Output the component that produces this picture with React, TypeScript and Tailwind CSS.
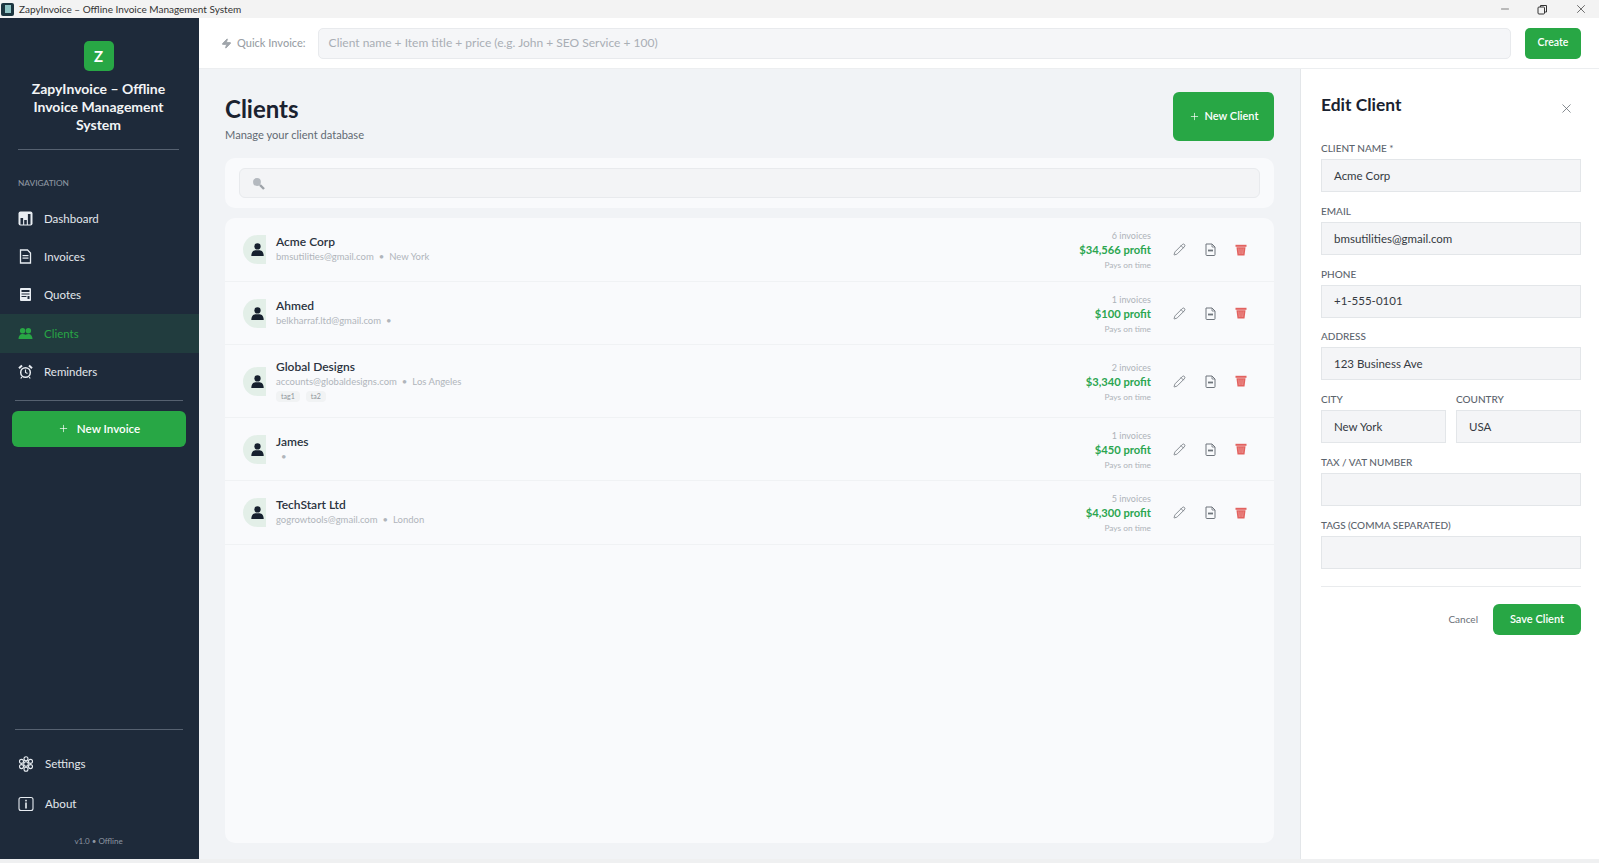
// App.tsx
import { Pencil, Plus, X, Minus, Zap } from "lucide-react";

type Client = {
  name: string;
  email: string;
  city: string;
  invoices: number;
  profit: string;
  tags?: string[];
  h: string;
};

const clients: Client[] = [
  { name: "Acme Corp", email: "bmsutilities@gmail.com", city: "New York", invoices: 6, profit: "$34,566", h: "h-[64px]" },
  { name: "Ahmed", email: "belkharraf.ltd@gmail.com", city: "", invoices: 1, profit: "$100", h: "h-[63px]" },
  { name: "Global Designs", email: "accounts@globaldesigns.com", city: "Los Angeles", invoices: 2, profit: "$3,340", tags: ["tag1", "ta2"], h: "h-[73px]" },
  { name: "James", email: "", city: "", invoices: 1, profit: "$450", h: "h-[63px]" },
  { name: "TechStart Ltd", email: "gogrowtools@gmail.com", city: "London", invoices: 5, profit: "$4,300", h: "h-[64px]" },
];

function DashboardIcon() {
  return (
    <svg width="15" height="15" viewBox="0 0 15 15">
      <rect x="0.5" y="0.5" width="14" height="14" rx="2" fill="#e8edf2" />
      <rect x="2.5" y="7" width="2.6" height="6.5" fill="#1e2a3a" />
      <rect x="6.2" y="9" width="2.6" height="4.5" fill="#1e2a3a" />
      <rect x="9.9" y="3" width="2.6" height="10.5" fill="#1e2a3a" />
    </svg>
  );
}

function InvoiceIcon() {
  return (
    <svg width="15" height="15" viewBox="0 0 15 15">
      <path d="M2.5 1h7l3 3v10h-10z" fill="none" stroke="#e8edf2" strokeWidth="1.3" />
      <rect x="4.5" y="6" width="6" height="1.2" fill="#e8edf2" />
      <rect x="4.5" y="8.5" width="6" height="1.2" fill="#e8edf2" />
    </svg>
  );
}

function QuoteIcon() {
  return (
    <svg width="15" height="15" viewBox="0 0 15 15">
      <rect x="2" y="1" width="11" height="13" rx="1" fill="#e8edf2" />
      <rect x="3.5" y="3" width="8" height="2" fill="#1e2a3a" />
      <rect x="3.5" y="6.5" width="8" height="1" fill="#1e2a3a" />
      <rect x="3.5" y="9" width="5" height="1" fill="#1e2a3a" />
      <rect x="9.5" y="9" width="2" height="3" fill="#1e2a3a" />
    </svg>
  );
}

function ClientsIcon() {
  return (
    <svg width="15" height="15" viewBox="0 0 15 15" fill="#28a745">
      <circle cx="4.6" cy="4.8" r="2.7" />
      <circle cx="10.4" cy="4.8" r="2.7" />
      <path d="M0.5 13c0-3 1.5-5 4-5s3 1 3 1 .6-1 3-1 4 2 4 5z" />
    </svg>
  );
}

function AlarmIcon() {
  return (
    <svg width="15" height="15" viewBox="0 0 15 15" fill="none" stroke="#e8edf2">
      <circle cx="7.5" cy="8.5" r="4.8" strokeWidth="1.5" />
      <path d="M7.5 5.5v3l2 1" strokeWidth="1.1" />
      <path d="M1 4.2 4 1.4M14 4.2 11 1.4" strokeWidth="2" />
      <path d="M3.8 13 2.8 14.5M11.2 13l1 1.5" strokeWidth="1.2" />
    </svg>
  );
}

function GearIcon() {
  return (
    <svg width="16" height="16" viewBox="0 0 16 16" fill="none" stroke="#e8edf2" strokeWidth="1.1">
      <circle cx="8" cy="8" r="2.3" />
      <circle cx="8" cy="2.8" r="2" />
      <circle cx="8" cy="13.2" r="2" />
      <circle cx="3.5" cy="5.4" r="2" />
      <circle cx="12.5" cy="5.4" r="2" />
      <circle cx="3.5" cy="10.6" r="2" />
      <circle cx="12.5" cy="10.6" r="2" />
    </svg>
  );
}

function InfoIcon() {
  return (
    <svg width="16" height="16" viewBox="0 0 16 16" fill="none" stroke="#e8edf2">
      <rect x="1" y="1.5" width="14" height="13" rx="2" strokeWidth="1.1" />
      <rect x="7.2" y="3.8" width="1.6" height="1.6" fill="#e8edf2" stroke="none" />
      <rect x="7.2" y="6.5" width="1.6" height="6" fill="#e8edf2" stroke="none" />
    </svg>
  );
}

function PersonIcon() {
  return (
    <svg width="13" height="13" viewBox="0 0 12 12" fill="#16202e">
      <circle cx="6" cy="3.2" r="2.9" />
      <path d="M0.3 12c0-3.6 1.8-5 3.6-5.2h4.2c1.8.2 3.6 1.6 3.6 5.2z" />
    </svg>
  );
}

function DocIcon() {
  return (
    <svg width="11" height="13" viewBox="0 0 11 13" fill="none" stroke="#6f757c" strokeWidth="1">
      <path d="M1 1h6l3 3v7.7a.8.8 0 0 1-.8.8H1.8a.8.8 0 0 1-.8-.8z" />
      <path d="M7 1v3h3" strokeWidth="0.8" />
      <rect x="3" y="6.6" width="5" height="1.8" fill="#6f757c" stroke="none" />
    </svg>
  );
}

function TrashIcon() {
  return (
    <svg width="12" height="12" viewBox="0 0 12 12">
      <rect x="0.5" y="0.8" width="11" height="2" fill="#e2625f" />
      <path d="M1.5 3.2h9l-1 8.3h-7z" fill="#e2625f" />
      <path d="M3.8 4.5l.5 5.5M6 4.5V10M8.2 4.5l-.5 5.5" stroke="#f3b2b0" strokeWidth="0.6" />
    </svg>
  );
}

function SearchIcon() {
  return (
    <svg width="13" height="13" viewBox="0 0 13 13">
      <circle cx="5" cy="5" r="3.9" fill="#b4b9bf" />
      <path d="M8 8l4 4" stroke="#9da2a8" strokeWidth="2.4" />
    </svg>
  );
}

function NavItem({ icon, label, active }: { icon: React.ReactNode; label: string; active?: boolean }) {
  return (
    <div
      className={
        "flex h-[38.4px] items-center gap-[11px] pl-[18px] text-[11.5px] " +
        (active ? "bg-[#213c3e] text-[#28a745]" : "text-[#e2e7ec]")
      }
    >
      <span className="flex w-[15px] justify-center">{icon}</span>
      <span>{label}</span>
    </div>
  );
}

function Field({ label, value, className }: { label: string; value?: string; className?: string }) {
  return (
    <div className={className}>
      <div className="mb-[4px] h-[14px] text-[10px] leading-[14px] font-medium text-[#5c646d] uppercase">{label}</div>
      <div className="flex h-[33px] items-center border border-[#e3e6e9] bg-[#f4f5f7] px-[12px] text-[11.5px] text-[#343a42]">
        {value}
      </div>
    </div>
  );
}

function ClientRow({ client }: { client: Client }) {
  return (
    <div className={"flex items-center border-b border-[#f0f2f4] pr-[27px] pl-[18px] " + client.h}>
      <div className="flex h-[29px] w-[23px] items-center justify-end rounded-l-full bg-[#e3efe8] pr-[2.5px]">
        <PersonIcon />
      </div>
      <div className="ml-[10px] min-w-0 flex-1 -translate-y-[1px]">
        <div className="text-[12px] leading-[16px] font-semibold text-[#2b3340]">{client.name}</div>
        <div className="flex h-[13px] items-center text-[9.5px] leading-[13px] text-[#b0b5bb]">
          <span>{client.email}</span>
          <span className="mx-[5px]">•</span>
          <span>{client.city}</span>
        </div>
        {client.tags && (
          <div className="mt-[3px] flex gap-[6px]">
            {client.tags.map((t) => (
              <span key={t} className="rounded-[4px] bg-[#f1f3f4] px-[5px] text-[7px] leading-[11px] text-[#8f959b]">
                {t}
              </span>
            ))}
          </div>
        )}
      </div>
      <div className="mt-[2px] text-right">
        <div className="text-[9px] leading-[12px] text-[#aeb3b9]">{client.invoices} invoices</div>
        <div className="text-[11.2px] leading-[16px] font-bold text-[#2ba650]">{client.profit} profit</div>
        <div className="mt-[1px] text-[8.3px] leading-[12px] text-[#aeb3b9]">Pays on time</div>
      </div>
      <div className="ml-[22px] flex w-[74px] items-center justify-between">
        <Pencil size={13} strokeWidth={1.5} color="#6f757c" />
        <DocIcon />
        <TrashIcon />
      </div>
    </div>
  );
}

export default function App() {
  return (
    <div className="flex h-screen w-full flex-col overflow-hidden bg-white font-['Lato',sans-serif]">
      {/* Title bar */}
      <div className="flex h-[18px] shrink-0 items-center bg-[#f3f3f3] pl-[1px] text-[#333]">
        <div className="flex h-[13px] w-[13px] items-center justify-center rounded-[2px] bg-[#1d3640]">
          <div className="h-[8px] w-[6px] bg-[#8fc4c4]" />
        </div>
        <span className="ml-[5px] text-[10px]">ZapyInvoice – Offline Invoice Management System</span>
        <div className="mr-[11px] ml-auto flex items-center gap-[26px]">
          <Minus size={12} strokeWidth={1.2} />
          <svg width="11" height="11" viewBox="0 0 11 11" fill="none" stroke="#333">
            <rect x="1" y="3" width="6.5" height="7" rx="1" />
            <path d="M3.5 3V1.5h6v6.5H7.5" />
          </svg>
          <X size={14} strokeWidth={1.2} />
        </div>
      </div>

      <div className="flex min-h-0 flex-1">
        {/* Sidebar */}
        <aside className="flex w-[199px] shrink-0 flex-col bg-[#1e2a3a] pt-[23px]">
          <div className="mx-auto flex h-[30px] w-[30px] -translate-x-[1px] items-center justify-center rounded-[5px] bg-[#28a745] text-[15px] font-bold text-white">
            Z
          </div>
          <div className="mt-[9px] pr-[19px] pl-[17px] text-center text-[14px] leading-[18px] font-bold text-[#f2f4f6]">
            ZapyInvoice – Offline Invoice Management System
          </div>
          <div className="mr-[20px] ml-[18px] mt-[15px] h-px bg-[#566170]" />
          <div className="mt-[27px] mb-[10px] pl-[18px] text-[8.3px] leading-[12px] font-medium text-[#8d96a1]">NAVIGATION</div>
          <NavItem icon={<DashboardIcon />} label="Dashboard" />
          <NavItem icon={<InvoiceIcon />} label="Invoices" />
          <NavItem icon={<QuoteIcon />} label="Quotes" />
          <NavItem icon={<ClientsIcon />} label="Clients" active />
          <NavItem icon={<AlarmIcon />} label="Reminders" />
          <div className="mr-[16px] ml-[15px] mt-[9px] h-px bg-[#566170]" />
          <div className="mr-[13px] ml-[12px] mt-[10px] flex h-[36px] items-center justify-center gap-[8px] rounded-[6px] bg-[#28a745] text-[11.6px] font-semibold text-white">
            <Plus size={11} strokeWidth={1.5} />
            New Invoice
          </div>
          <div className="mr-[16px] ml-[15px] mt-auto h-px bg-[#566170]" />
          <div className="mt-[14px] flex h-[40px] items-center gap-[11px] pl-[18px] text-[11.6px] text-[#e2e7ec]">
            <GearIcon />
            Settings
          </div>
          <div className="flex h-[40px] items-center gap-[11px] pl-[18px] text-[11.6px] text-[#e2e7ec]">
            <InfoIcon />
            About
          </div>
          <div className="mt-[11px] mb-[12px] pr-[2px] text-center text-[8px] leading-[12px] text-[#8d96a1]">v1.0 • Offline</div>
        </aside>

        <div className="flex min-w-0 flex-1 flex-col">
          {/* Quick invoice bar */}
          <div className="flex h-[51px] shrink-0 items-center border-b border-[#eceef0] bg-white pr-[18px] pl-[22px]">
            <Zap size={11} fill="#a0a5ab" stroke="#a0a5ab" />
            <span className="ml-[5px] text-[11px] font-medium text-[#9a9fa6]">Quick Invoice:</span>
            <div className="ml-[12px] flex h-[31px] flex-1 items-center rounded-[5px] border border-[#e8eaed] bg-[#f5f6f8] px-[10px] text-[12px] text-[#a9aeb5]">
              Client name + Item title + price (e.g. John + SEO Service + 100)
            </div>
            <div className="ml-[14px] flex h-[31px] w-[56px] items-center justify-center rounded-[5px] bg-[#28a745] text-[10.5px] font-semibold text-white">
              Create
            </div>
          </div>

          <div className="flex min-h-0 flex-1">
            {/* Clients */}
            <main className="flex min-w-0 flex-1 flex-col bg-[#f1f3f6] px-[26px] pt-[23px] pb-[16px]">
              <div className="flex h-[49px] shrink-0 items-start justify-between">
                <div>
                  <h1 className="mt-[1px] text-[24px] leading-[32px] font-bold text-[#1a2230]">Clients</h1>
                  <p className="mt-[2px] text-[11.1px] leading-[16px] text-[#626a73]">Manage your client database</p>
                </div>
                <div className="flex h-[49px] w-[101px] items-center justify-center gap-[5px] rounded-[6px] bg-[#28a745] text-[11px] font-semibold text-white">
                  <Plus size={11} strokeWidth={1.5} />
                  New Client
                </div>
              </div>

              <div className="mt-[17px] shrink-0 rounded-[10px] bg-[#f9fafc] p-[10px_14px]">
                <div className="flex h-[30px] items-center rounded-[6px] border border-[#e8eaed] bg-[#f3f4f6] pl-[12px]">
                  <SearchIcon />
                </div>
              </div>

              <div className="mt-[10px] min-h-0 flex-1 rounded-[10px] bg-[#f9fafc]">
                {clients.map((c) => (
                  <ClientRow key={c.name} client={c} />
                ))}
              </div>
            </main>

            {/* Edit panel */}
            <section className="w-[299px] shrink-0 border-l border-[#e3e6e9] bg-white pt-[23px] pr-[18px] pl-[20px]">
              <div className="flex h-[26px] items-center justify-between">
                <h2 className="text-[17.4px] font-bold text-[#1a2230]">Edit Client</h2>
                <X size={15} strokeWidth={1.2} color="#5f656c" className="mt-[6px] mr-[7px]" />
              </div>
              <div className="mt-[23px] flex flex-col gap-[11.8px]">
                <Field label="Client Name *" value="Acme Corp" />
                <Field label="Email" value="bmsutilities@gmail.com" />
                <Field label="Phone" value="+1-555-0101" />
                <Field label="Address" value="123 Business Ave" />
                <div className="flex gap-[10px]">
                  <Field label="City" value="New York" className="flex-1" />
                  <Field label="Country" value="USA" className="flex-1" />
                </div>
                <Field label="Tax / VAT Number" />
                <Field label="Tags (comma separated)" />
              </div>
              <div className="mt-[17px] h-px bg-[#e9ebed]" />
              <div className="mt-[17px] flex items-center justify-end">
                <span className="text-[10px] text-[#6a7077]">Cancel</span>
                <div className="ml-[15px] flex h-[31px] w-[88px] items-center justify-center rounded-[6px] bg-[#28a745] text-[11px] font-semibold text-white">
                  Save Client
                </div>
              </div>
            </section>
          </div>
        </div>
      </div>
      <div className="h-[4px] shrink-0 bg-[#eff0f1]" />
    </div>
  );
}
